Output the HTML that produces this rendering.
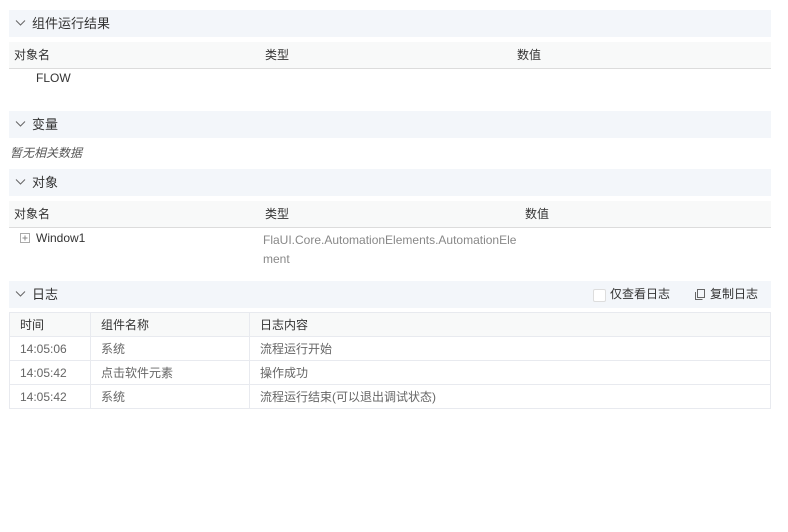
<!DOCTYPE html>
<html><head><meta charset="utf-8"><style>
body{margin:0;width:788px;height:532px;background:#fff;font-family:"Liberation Sans","Noto Sans CJK SC",sans-serif;font-size:12px;color:#333;position:relative;overflow:hidden}
.a{position:absolute}
.hd{position:absolute;left:9px;width:762px;height:27px;background:#f3f6fa;font-size:13px;color:#333;line-height:27px}
.hd svg{position:absolute;left:6px;top:9px}
.hd span{position:absolute;left:23px}
.th{position:absolute;left:9px;width:762px;height:26px;background:#f8f9f9;border-bottom:1px solid #dcdcdc;line-height:26px}
.th span{position:absolute}
table{position:absolute;left:9px;top:312px;width:762px;border-collapse:collapse}
td{border:1px solid #e8eaef;height:23px;padding:0 0 0 10px;color:#666;font-size:12px}
tr:first-child td{background:#f8f9f9;color:#333}
</style></head><body>
<div class="hd" style="top:10px"><svg width="11" height="8"><path d="M1 1.5L5.5 6L10 1.5" fill="none" stroke="#666" stroke-width="1"/></svg><span>组件运行结果</span></div>
<div class="th" style="top:42px"><span style="left:5px">对象名</span><span style="left:256px">类型</span><span style="left:508px">数值</span></div>
<div class="a" style="left:36px;top:71px;color:#333">FLOW</div>
<div class="hd" style="top:111px"><svg width="11" height="8"><path d="M1 1.5L5.5 6L10 1.5" fill="none" stroke="#666" stroke-width="1"/></svg><span>变量</span></div>
<div class="a" style="left:10px;top:144px;font-style:italic;color:#555">暂无相关数据</div>
<div class="hd" style="top:169px"><svg width="11" height="8"><path d="M1 1.5L5.5 6L10 1.5" fill="none" stroke="#666" stroke-width="1"/></svg><span>对象</span></div>
<div class="th" style="top:201px"><span style="left:5px">对象名</span><span style="left:256px">类型</span><span style="left:516px">数值</span></div>
<svg class="a" style="left:20px;top:233px" width="10" height="10"><rect x="0.5" y="0.5" width="9" height="9" fill="none" stroke="#aaa"/><path d="M2.5 5h5M5 2.5v5" stroke="#888"/></svg>
<div class="a" style="left:36px;top:231px">Window1</div>
<div class="a" style="left:263px;top:231px;color:#888;line-height:19px;width:260px">FlaUI.Core.AutomationElements.AutomationEle<br>ment</div>
<div class="hd" style="top:281px"><svg width="11" height="8"><path d="M1 1.5L5.5 6L10 1.5" fill="none" stroke="#666" stroke-width="1"/></svg><span>日志</span>
<div class="a" style="left:584px;top:8px;width:11px;height:11px;border:1px solid #ddd;background:#fff;border-radius:2px"></div>
<span style="left:601px;font-size:12px">仅查看日志</span>
<svg class="a" style="left:686px;top:8px" width="10" height="11"><rect x="2.5" y="0.5" width="7" height="8" fill="none" stroke="#666"/><path d="M0.5 3v7.5h7" fill="none" stroke="#666"/></svg>
<span style="left:701px;font-size:12px">复制日志</span></div>
<table>
<tr><td style="width:70px">时间</td><td style="width:148px">组件名称</td><td>日志内容</td></tr>
<tr><td>14:05:06</td><td>系统</td><td>流程运行开始</td></tr>
<tr><td>14:05:42</td><td>点击软件元素</td><td>操作成功</td></tr>
<tr><td>14:05:42</td><td>系统</td><td>流程运行结束(可以退出调试状态)</td></tr>
</table>
</body></html>
